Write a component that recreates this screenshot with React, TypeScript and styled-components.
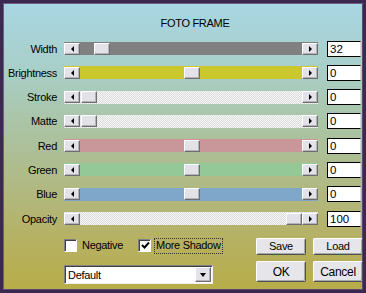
import React from 'react'
import styled, { createGlobalStyle } from 'styled-components'

const GlobalStyle = createGlobalStyle`
  html, body {
    margin: 0;
    padding: 0;
    background: #3b2950;
  }
  body {
    font-family: "Liberation Sans", Arial, sans-serif;
  }
`

const sliders = [
  { label: 'Width', value: '32', t: 0.063, track: '#808080' },
  { label: 'Brightness', value: '0', t: 0.5, track: '#cbc82e' },
  { label: 'Stroke', value: '0', t: 0, track: 'dither' },
  { label: 'Matte', value: '0', t: 0, track: 'dither' },
  { label: 'Red', value: '0', t: 0.5, track: '#c9969a' },
  { label: 'Green', value: '0', t: 0.5, track: '#94c896' },
  { label: 'Blue', value: '0', t: 0.5, track: '#7ea7c9' },
  { label: 'Opacity', value: '100', t: 1, track: 'dither' }
]

const App = () => {
  return (
    <>
      <GlobalStyle />
      <Frame>
        <Title>{'FOTO FRAME'}</Title>
        <SliderGrid>
          {sliders.map((s) => (
            <React.Fragment key={s.label}>
              <Label>{s.label}</Label>
              <Track $color={s.track}>
                <ArrowButton>
                  <ArrowLeft />
                </ArrowButton>
                <Thumb style={{ left: 17 + Math.round(s.t * 205) }} />
                <ArrowButton>
                  <ArrowRight />
                </ArrowButton>
              </Track>
              <ValueBox>{s.value}</ValueBox>
            </React.Fragment>
          ))}
        </SliderGrid>
        <BottomArea>
          <LeftColumn>
            <CheckRow>
              <CheckItem>
                <CheckBox />
                <CheckLabel>{'Negative'}</CheckLabel>
              </CheckItem>
              <CheckItem>
                <CheckBox>
                  <svg width="9" height="9" viewBox="0 0 9 9">
                    <polyline
                      points="1,4 3.5,6.5 8,1.5"
                      fill="none"
                      stroke="#000"
                      strokeWidth="1.9"
                    />
                  </svg>
                </CheckBox>
                <CheckLabel $focused>{'More Shadow'}</CheckLabel>
              </CheckItem>
            </CheckRow>
            <Select>
              <SelectText>{'Default'}</SelectText>
              <SelectButton>
                <ArrowDown />
              </SelectButton>
            </Select>
          </LeftColumn>
          <ButtonGrid>
            <PushButton>{'Save'}</PushButton>
            <PushButton>{'Load'}</PushButton>
            <PushButton $tall>{'OK'}</PushButton>
            <PushButton $tall>{'Cancel'}</PushButton>
          </ButtonGrid>
        </BottomArea>
      </Frame>
    </>
  )
}

export default App

const Frame = styled.div`
  width: 366px;
  height: 293px;
  box-sizing: border-box;
  border: 3px solid #3b2950;
  box-shadow: inset 1px 1px 0 #6d5c86, inset -1px -1px 0 #5a4870;
  background: linear-gradient(
    180deg,
    #a8d6e2 0%,
    #a8cfca 22%,
    #aac4a6 42%,
    #b0ba86 62%,
    #b6b164 82%,
    #b8ad48 100%
  );
  padding-top: 14px;
  display: flex;
  flex-direction: column;
  font-size: 11px;
  letter-spacing: -0.3px;
  color: #000;
`

const Title = styled.div`
  height: 13px;
  line-height: 13px;
  text-align: center;
  padding-left: 24px;
  font-size: 11px;
`

const SliderGrid = styled.div`
  margin-top: 10.5px;
  display: grid;
  grid-template-columns: 54px 254px 36px;
  column-gap: 7px;
  grid-auto-rows: 16px;
  row-gap: 8.3px;
  > *:nth-child(3n) {
    margin-left: 2px;
  }
`

const Label = styled.div`
  text-align: right;
  line-height: 16px;
  white-space: nowrap;
`

const Track = styled.div<{ $color: string }>`
  position: relative;
  height: 13px;
  align-self: center;
  display: flex;
  justify-content: space-between;
  align-items: center;
  background: ${(p) =>
    p.$color === 'dither'
      ? 'repeating-conic-gradient(#f6f6f6 0 25%, #dcdcdc 0 50%) 0 0 / 2px 2px'
      : p.$color};
`

const bevel = `
  box-sizing: border-box;
  background: #e2e2e8;
  border-top: 1px solid #ffffff;
  border-left: 1px solid #ffffff;
  border-right: 1px solid #6e6e6e;
  border-bottom: 1px solid #6e6e6e;
  box-shadow: inset -1px -1px 0 #b4b4b8;
`

const ArrowButton = styled.div`
  ${bevel}
  width: 16px;
  height: 12px;
  display: flex;
  align-items: center;
  justify-content: center;
`

const ArrowLeft = styled.span`
  width: 0;
  height: 0;
  border-top: 3px solid transparent;
  border-bottom: 3px solid transparent;
  border-right: 3px solid #000;
`

const ArrowRight = styled.span`
  width: 0;
  height: 0;
  border-top: 3px solid transparent;
  border-bottom: 3px solid transparent;
  border-left: 3px solid #000;
`

const Thumb = styled.div`
  ${bevel}
  position: absolute;
  top: 0.5px;
  width: 16px;
  height: 12px;
`

const ValueBox = styled.div`
  box-sizing: border-box;
  height: 16px;
  background: #fff;
  border: 1px solid #000;
  border-right-color: #d8d8d8;
  padding-left: 2px;
  line-height: 14px;
  font-size: 11.5px;
  letter-spacing: 0;
`

const BottomArea = styled.div`
  margin-top: 11px;
  display: flex;
  justify-content: space-between;
`

const LeftColumn = styled.div`
  padding-left: 61px;
  display: flex;
  flex-direction: column;
  gap: 10.5px;
`

const CheckRow = styled.div`
  height: 17px;
  display: flex;
  align-items: center;
  gap: 14px;
`

const CheckItem = styled.div`
  display: flex;
  align-items: center;
  gap: 4px;
`

const CheckBox = styled.div`
  box-sizing: border-box;
  width: 13px;
  height: 13px;
  margin-top: -2px;
  background: #fff;
  border-top: 1px solid #808080;
  border-left: 1px solid #808080;
  border-right: 1px solid #ffffff;
  border-bottom: 1px solid #ffffff;
  box-shadow: inset 1px 1px 0 #404040;
  display: flex;
  align-items: center;
  justify-content: center;
  padding: 1px 0 0 1px;
`

const CheckLabel = styled.span<{ $focused?: boolean }>`
  padding: 0 1px 1px 1px;
  line-height: 13px;
  outline: ${(p) => (p.$focused ? '1px dotted #333' : 'none')};
  outline-offset: 0;
`

const Select = styled.div`
  box-sizing: border-box;
  width: 149px;
  height: 19px;
  background: #fff;
  border-top: 1px solid #808080;
  border-left: 1px solid #808080;
  border-right: 1px solid #f0f0f0;
  border-bottom: 1px solid #f0f0f0;
  box-shadow: inset 1px 1px 0 #404040;
  display: flex;
  align-items: center;
  justify-content: space-between;
  padding: 0 1px 0 3px;
`

const SelectText = styled.span`
  font-size: 11px;
`

const SelectButton = styled.div`
  ${bevel}
  width: 16px;
  height: 15px;
  display: flex;
  align-items: center;
  justify-content: center;
`

const ArrowDown = styled.span`
  width: 0;
  height: 0;
  border-left: 3.5px solid transparent;
  border-right: 3.5px solid transparent;
  border-top: 4px solid #000;
`

const ButtonGrid = styled.div`
  display: grid;
  grid-template-columns: 50px 50px;
  grid-template-rows: 17px 21px;
  column-gap: 7px;
  row-gap: 6.5px;
`

const PushButton = styled.div<{ $tall?: boolean }>`
  box-sizing: border-box;
  background: #e6e6ea;
  border-top: 1px solid #ffffff;
  border-left: 1px solid #ffffff;
  border-right: 1px solid #505050;
  border-bottom: 1px solid #505050;
  box-shadow: inset -1px -1px 0 #a8a8ac;
  border-radius: 2px;
  display: flex;
  align-items: center;
  justify-content: center;
  font-size: ${(p) => (p.$tall ? '12px' : '11px')};
`
